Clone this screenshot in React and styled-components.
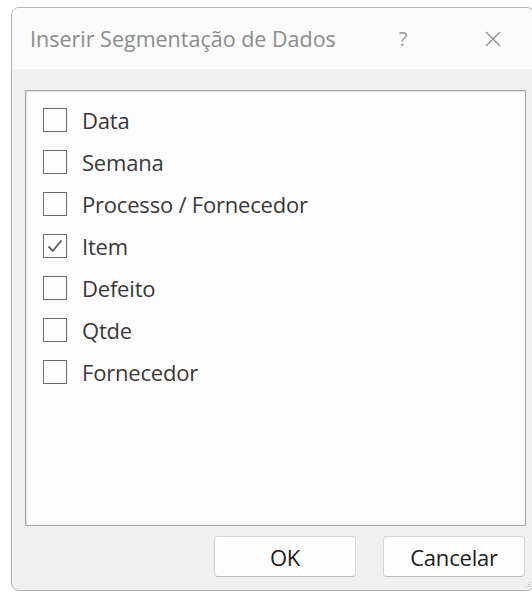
import React from "react";
import styled, { createGlobalStyle } from "styled-components";

const GlobalStyle = createGlobalStyle`
  html, body {
    margin: 0;
    padding: 0;
    background: #ffffff;
    overflow: hidden;
  }
  body {
    font-family: "Open Sans", "Noto Sans", "Liberation Sans", sans-serif;
  }
`;

const Page = styled.div`
  width: 532px;
  height: 594px;
  padding: 7px 0 0 11px;
  box-sizing: border-box;
  overflow: hidden;
`;

const Dialog = styled.div`
  width: 524px;
  height: 584px;
  box-sizing: border-box;
  border: 1px solid #b4b4b4;
  border-radius: 8px;
  background: #f0f0f0;
  display: flex;
  flex-direction: column;
  overflow: hidden;
  position: relative;
`;

const TitleBar = styled.div`
  height: 61px;
  flex: none;
  background: #fafafa;
  display: flex;
  align-items: center;
  padding: 0 0 0 18px;
`;

const Title = styled.div`
  flex: 1;
  font-size: 21.5px;
  color: #8c8c8c;
  letter-spacing: 0px;
`;

const TitleButton = styled.div`
  width: 40px;
  height: 40px;
  display: flex;
  align-items: center;
  justify-content: center;
  color: #9a9a9a;
  font-size: 20px;
  margin-right: ${(p) => p.$gap}px;
`;

const Body = styled.div`
  flex: 1;
  display: flex;
  flex-direction: column;
  padding: 21px 0 0 13px;
`;

const ListBox = styled.div`
  width: 501px;
  height: 436px;
  box-sizing: border-box;
  background: #fdfdfd;
  border: 1px solid #a6a6a6;
  box-shadow: inset 1px 1px 0 #e2e2e2;
  padding: 8px 0 0 17px;
  display: flex;
  flex-direction: column;
`;

const Row = styled.label`
  height: 42px;
  display: flex;
  align-items: center;
  gap: 15px;
  font-size: 22px;
  color: #383838;
  letter-spacing: -0.2px;
`;

const Box = styled.span`
  width: 24px;
  height: 24px;
  box-sizing: border-box;
  border: 1.5px solid #6a6a6a;
  background: #fdfdfd;
  display: flex;
  align-items: center;
  justify-content: center;
  flex: none;
`;

const Buttons = styled.div`
  display: flex;
  gap: 27px;
  padding: 10px 0 0 189px;
`;

const Button = styled.button`
  width: 142px;
  height: 41px;
  box-sizing: border-box;
  border: 1px solid #d4d4d4;
  border-bottom-color: #bdbdbd;
  border-radius: 4px;
  background: #fdfdfd;
  font-family: inherit;
  font-size: 22px;
  color: #1b1b1b;
  letter-spacing: -0.2px;
  padding: 0;
`;

const Grip = styled.svg`
  position: absolute;
  right: 2px;
  bottom: 2px;
`;

const items = [
  { label: "Data", checked: false },
  { label: "Semana", checked: false },
  { label: "Processo / Fornecedor", checked: false },
  { label: "Item", checked: true },
  { label: "Defeito", checked: false },
  { label: "Qtde", checked: false },
  { label: "Fornecedor", checked: false },
];

function CheckMark() {
  return (
    <svg width="18" height="18" viewBox="0 0 18 18">
      <path d="M2.5 9.5 L6.8 13.8 L15.5 3.5" fill="none" stroke="#5a5a5a" strokeWidth="1.8" />
    </svg>
  );
}

function CloseIcon() {
  return (
    <svg width="18" height="18" viewBox="0 0 18 18">
      <path d="M2 2 L16 16 M16 2 L2 16" stroke="#8e8e8e" strokeWidth="1.3" />
    </svg>
  );
}

export default function App() {
  return (
    <>
      <GlobalStyle />
      <Page>
        <Dialog>
          <TitleBar>
            <Title>Inserir Segmentação de Dados</Title>
            <TitleButton $gap={50}>?</TitleButton>
            <TitleButton $gap={21}>
              <CloseIcon />
            </TitleButton>
          </TitleBar>
          <Body>
            <ListBox>
              {items.map((it) => (
                <Row key={it.label}>
                  <Box>{it.checked && <CheckMark />}</Box>
                  {it.label}
                </Row>
              ))}
            </ListBox>
            <Buttons>
              <Button>OK</Button>
              <Button>Cancelar</Button>
            </Buttons>
          </Body>
          <Grip width="8" height="8" viewBox="0 0 8 8">
            <rect x="6" y="2" width="1" height="1" fill="#b0b0b0" />
            <rect x="4" y="4" width="1" height="1" fill="#b0b0b0" />
            <rect x="6" y="4" width="1" height="1" fill="#b0b0b0" />
            <rect x="2" y="6" width="1" height="1" fill="#b0b0b0" />
            <rect x="4" y="6" width="1" height="1" fill="#b0b0b0" />
            <rect x="6" y="6" width="1" height="1" fill="#b0b0b0" />
          </Grip>
        </Dialog>
      </Page>
    </>
  );
}
